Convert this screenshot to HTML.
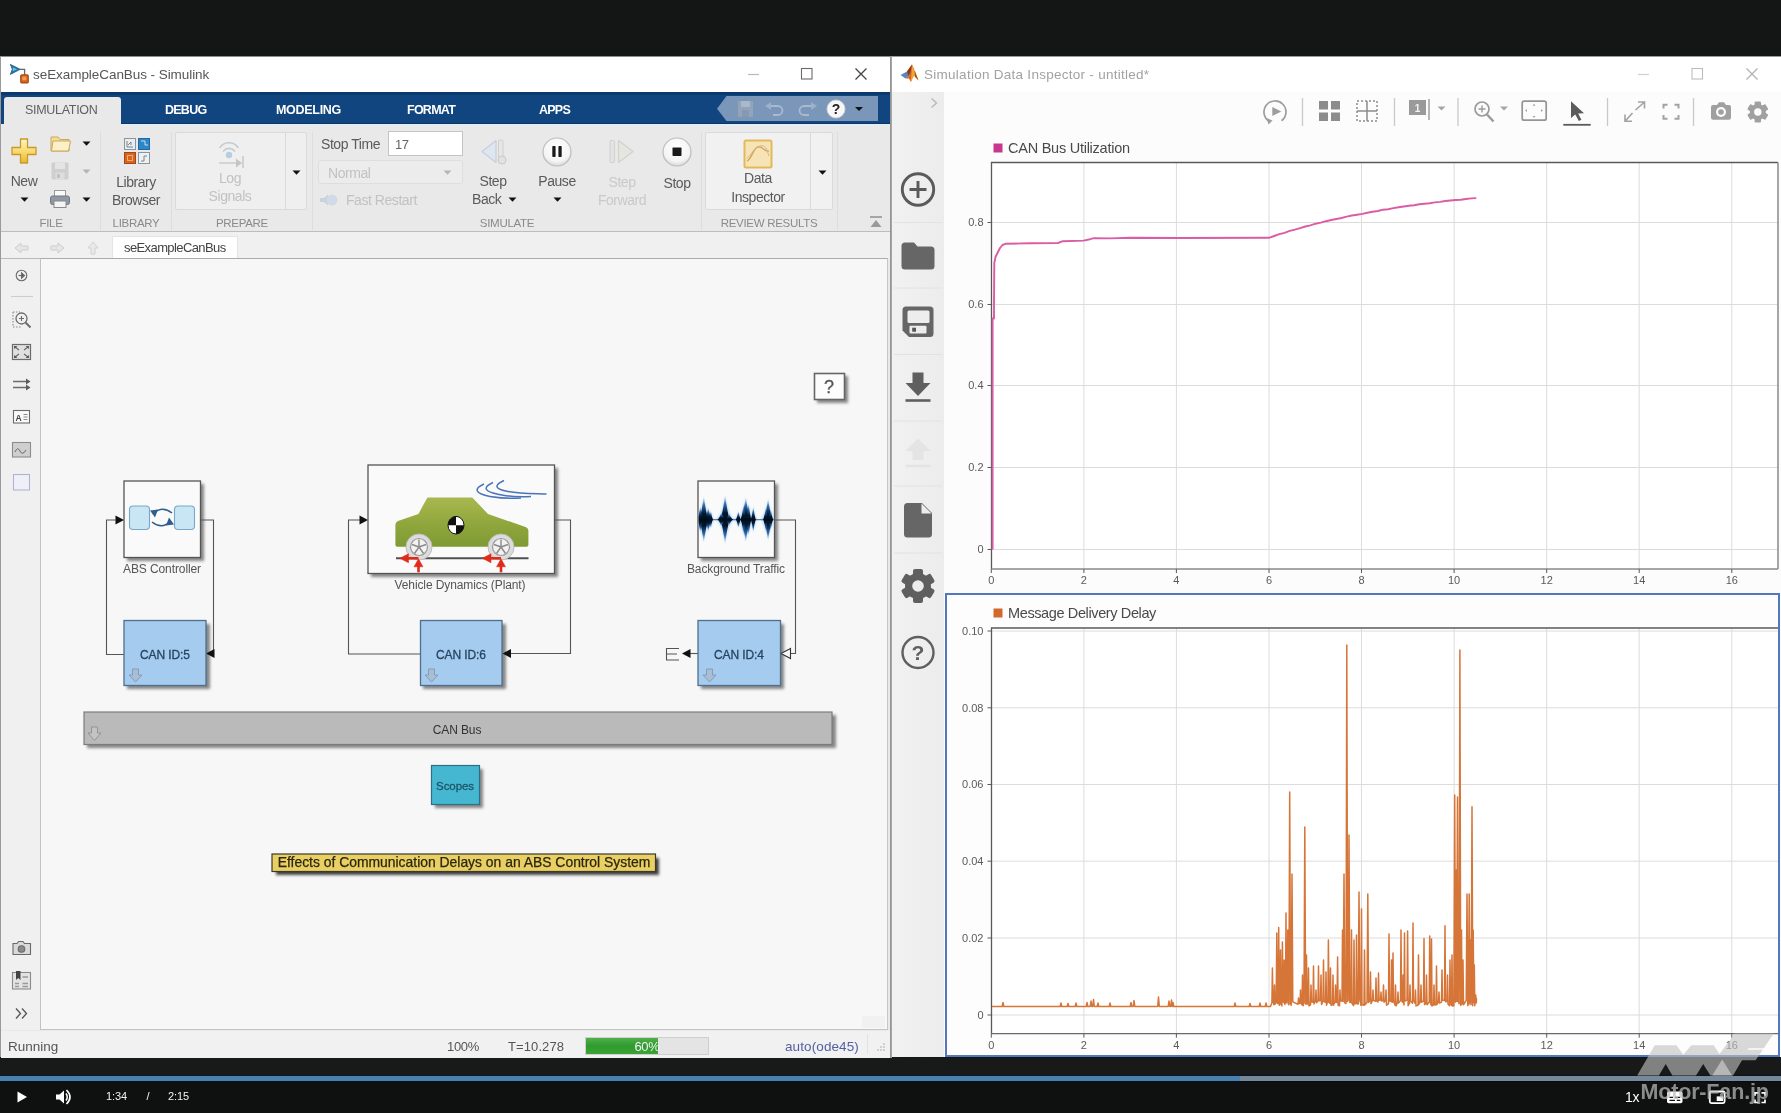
<!DOCTYPE html>
<html lang="en"><head><meta charset="utf-8"><title>seExampleCanBus - Simulink</title>
<style>
*{box-sizing:border-box;margin:0;padding:0}
html,body{width:1781px;height:1113px;overflow:hidden;background:#131615;font-family:"Liberation Sans",sans-serif;}
.a{position:absolute}
.t{position:absolute;white-space:nowrap;line-height:1;}
#root{position:absolute;left:0;top:0;width:1781px;height:1113px;overflow:hidden;background:#131615;filter:blur(0.7px)}
.ui{font-family:"Liberation Sans",sans-serif;color:#5a5a5a;font-size:13.5px;letter-spacing:-0.45px}
.c{text-align:center}
.dis{color:#c2c2c2}
.sec{font-size:11.5px;color:#8a8a8a;letter-spacing:-0.3px}
.tab{font-weight:bold;color:#fff;font-size:12.5px;letter-spacing:-0.75px}
.blk{font-size:12px;color:#555;letter-spacing:-0.1px}
.ax{font-size:11px;fill:#5a5a5a;font-family:"Liberation Sans",sans-serif}
svg{position:absolute;overflow:visible}
</style></head><body><div id="root">
<!-- ===== Simulink window ===== -->
<div class="a" id="simwin" style="left:0;top:56px;width:890px;height:1001px;background:#e9e9e9"></div>
<div class="a" style="left:0;top:56px;width:890px;height:37px;background:#fff"></div>
<!-- simulink icon -->
<svg style="left:9px;top:64px" width="22" height="22" viewBox="0 0 22 22">
 <path d="M1.400 0.400 L11.200 5.300 L1.400 10.400 L3.300 5.300 Z" fill="#2a78a4" stroke="#1c587c" stroke-width="0.800" stroke-linejoin="round"/>
 <path d="M3.800 3.500 L8 5.300 L3.800 7.300 Z" fill="#6cc0e6"/>
 <path d="M11 5.300 H15.600 V10.800" fill="none" stroke="#5a6a72" stroke-width="1.300"/>
 <rect x="11.700" y="10.800" width="7.600" height="8.200" rx="0.800" fill="#d9641c" stroke="#8c3608" stroke-width="0.900"/>
 <rect x="13.300" y="12.600" width="4" height="3.600" fill="#f39a52"/>
</svg>
<div class="t ui" style="left:33px;top:68.3px;font-size:13.5px;color:#565656;letter-spacing:-0.06px">seExampleCanBus - Simulink</div>
<!-- window controls -->
<svg style="left:740px;top:60px" width="140" height="28" viewBox="0 0 140 28">
 <path d="M8 14.5 H19" stroke="#b9b9b9" stroke-width="1.2"/>
 <rect x="61.5" y="8.5" width="10.5" height="10.5" fill="none" stroke="#6a6a6a" stroke-width="1.1"/>
 <path d="M115.5 8.5 L126.5 19.5 M126.5 8.5 L115.5 19.5" stroke="#444" stroke-width="1.3"/>
</svg>
<!-- tab bar -->
<div class="a" style="left:0;top:92px;width:890px;height:33px;background:#11457f"></div>
<div class="a" style="left:0;top:92px;width:890px;height:3px;background:#0d3a6e"></div>
<div class="a" style="left:4px;top:97px;width:117px;height:28px;background:#e9e9e9;border-radius:3px 3px 0 0"></div>
<div class="t tab" style="left:25px;top:104px;font-weight:normal;color:#606060;font-size:12.5px;letter-spacing:-0.3px">SIMULATION</div>
<div class="t tab" style="left:165px;top:104px">DEBUG</div>
<div class="t tab" style="left:276px;top:104px;letter-spacing:-0.3px">MODELING</div>
<div class="t tab" style="left:407px;top:104px">FORMAT</div>
<div class="t tab" style="left:539px;top:104px">APPS</div>
<!-- quick access -->
<svg style="left:715px;top:95px" width="170" height="28" viewBox="0 0 170 28">
 <path d="M2 13.800 L11.500 1 H163 V26 H11.500 Z" fill="#7a96b8"/>
 <!-- save -->
 <g fill="#94a4b8"><rect x="23" y="6" width="15" height="16" rx="1"/></g>
 <rect x="26" y="6" width="9" height="6" fill="#aab8cb"/><rect x="27" y="15" width="7" height="7" fill="#8499b5"/>
 <!-- undo -->
 <path d="M54 11 H63 a4.500 4.500 0 0 1 0 9 H58" fill="none" stroke="#a9b9cf" stroke-width="1.8"/>
 <path d="M50 11 L56 7 V15 Z" fill="#9db1cb"/>
 <!-- redo -->
 <path d="M98 11 H89 a4.500 4.500 0 0 0 0 9 H94" fill="none" stroke="#a9b9cf" stroke-width="1.8"/>
 <path d="M102 11 L96 7 V15 Z" fill="#9db1cb"/>
 <!-- help -->
 <circle cx="121" cy="14" r="9" fill="#f7f7f7" stroke="#d0d4da" stroke-width="1"/>
 <text x="121" y="19" text-anchor="middle" font-family="Liberation Sans, sans-serif" font-weight="bold" font-size="14" fill="#222">?</text>
 <path d="M140 12 H148 L144 16 Z" fill="#111"/>
</svg>
<!-- toolstrip -->
<div class="a" style="left:0;top:124px;width:890px;height:107px;background:#e9e9e9"></div>
<div class="a" style="left:0;top:231px;width:890px;height:1.500px;background:#bdbdbd"></div>
<div class="a" style="left:121px;top:124px;width:769px;height:1.500px;background:#e3edf7"></div>
<div class="a" style="left:121px;top:122.500px;width:769px;height:1.500px;background:#0c3568"></div>
<div class="a" style="left:0;top:56px;width:890px;height:1px;background:#8d8d8d"></div>
<!-- left window edge -->
<div class="a" style="left:0;top:56px;width:1px;height:1001px;background:#9a9a9a"></div>
<!-- ===== toolstrip content ===== -->
<!-- New -->
<svg style="left:10px;top:137px" width="28" height="28" viewBox="0 0 28 28">
 <defs><linearGradient id="gNew" x1="0" y1="0" x2="0" y2="1"><stop offset="0" stop-color="#fff6c4"/><stop offset="0.5" stop-color="#f9dc72"/><stop offset="1" stop-color="#ecb630"/></linearGradient></defs>
 <path d="M10.500 2 H17.500 V10.500 H26 V17.500 H17.500 V26 H10.500 V17.500 H2 V10.500 H10.500 Z" fill="url(#gNew)" stroke="#c79a2c" stroke-width="1.3" stroke-linejoin="round"/>
</svg>
<div class="t ui c" style="left:-26px;width:100px;top:174px;font-size:14px">New</div>
<svg style="left:20px;top:197px" width="10" height="6"><path d="M0.500 0.500 H8.500 L4.500 4.800 Z" fill="#111"/></svg>
<!-- folder -->
<svg style="left:49px;top:134px" width="24" height="20" viewBox="0 0 24 20">
 <path d="M2 3 H9 L11 5.500 H20 V17 H2 Z" fill="#f3dc9a" stroke="#c9a95a" stroke-width="1"/>
 <path d="M4 7 H21.500 L19.500 17 H2.500 Z" fill="#fbf0c8" stroke="#c9a95a" stroke-width="1"/>
</svg>
<svg style="left:82px;top:141px" width="10" height="6"><path d="M0.500 0.500 H8.500 L4.500 4.800 Z" fill="#111"/></svg>
<!-- save (disabled) -->
<svg style="left:50px;top:161px" width="20" height="20" viewBox="0 0 20 20">
 <rect x="1.500" y="1.500" width="17" height="17" rx="1.500" fill="#cfcfcf"/>
 <rect x="5" y="1.500" width="10" height="6.500" fill="#e4e4e4"/>
 <rect x="5.500" y="11.500" width="9" height="7" fill="#dedede"/><rect x="7" y="13" width="3" height="4" fill="#c2c2c2"/>
</svg>
<svg style="left:82px;top:169px" width="10" height="6"><path d="M0.500 0.500 H8.500 L4.500 4.800 Z" fill="#b5b5b5"/></svg>
<!-- print -->
<svg style="left:49px;top:189px" width="22" height="20" viewBox="0 0 22 20">
 <rect x="5.500" y="1.500" width="11" height="7" fill="#fafafa" stroke="#9a9a9a" stroke-width="1"/>
 <rect x="1.500" y="7" width="19" height="8.500" rx="2" fill="#8f98a3" stroke="#6f7883" stroke-width="1"/>
 <rect x="5" y="12" width="12" height="6.500" fill="#f4f4f4" stroke="#8a8a8a" stroke-width="1"/>
</svg>
<svg style="left:82px;top:197px" width="10" height="6"><path d="M0.500 0.500 H8.500 L4.500 4.800 Z" fill="#111"/></svg>
<div class="t sec c" style="left:1px;width:100px;top:218px">FILE</div>
<div class="a" style="left:100px;top:132px;width:1px;height:98px;background:#dddddd"></div>
<!-- Library browser -->
<svg style="left:123px;top:137px" width="28" height="28" viewBox="0 0 28 28">
 <rect x="1.500" y="1.500" width="11" height="11" fill="#e9edf0" stroke="#8c959c" stroke-width="1"/>
 <path d="M4 10 V4 M4 10 H10 M5 8 L8 5 M8 5 V8" stroke="#7b858e" stroke-width="1" fill="none"/>
 <rect x="15.500" y="1.500" width="11" height="11" fill="#2f86c4" stroke="#1d6aa5" stroke-width="1"/>
 <path d="M18 4 H22 V8 H25" stroke="#bfe0f5" stroke-width="1" fill="none"/>
 <rect x="1.500" y="15.500" width="11" height="11" fill="#d7641e" stroke="#a8440d" stroke-width="1"/>
 <rect x="4.500" y="18.500" width="5" height="5" fill="none" stroke="#f0a97c" stroke-width="1"/>
 <rect x="15.500" y="15.500" width="11" height="11" fill="#eef1f3" stroke="#8c959c" stroke-width="1"/>
 <path d="M18 24 H21 V19 H24" stroke="#7b858e" stroke-width="1" fill="none"/>
</svg>
<div class="t ui c" style="left:86px;width:100px;top:175px;font-size:14px">Library</div>
<div class="t ui c" style="left:86px;width:100px;top:193px;font-size:14px">Browser</div>
<div class="t sec c" style="left:86px;width:100px;top:218px">LIBRARY</div>
<div class="a" style="left:171px;top:132px;width:1px;height:98px;background:#dddddd"></div>
<!-- Prepare gallery -->
<div class="a" style="left:175px;top:132px;width:132px;height:78px;background:#efefef;border:1px solid #dadada;border-radius:2px"></div>
<div class="a" style="left:285px;top:133px;width:1px;height:76px;background:#dadada"></div>
<svg style="left:214px;top:138px" width="32" height="32" viewBox="0 0 32 32">
 <g fill="none" stroke="#c3cbd3" stroke-width="1.600" stroke-linecap="round">
  <path d="M6 9.500 A11 11 0 0 1 24 9.500"/><path d="M9.500 13 A7 7 0 0 1 20.500 13"/>
 </g>
 <circle cx="15" cy="17" r="3.200" fill="#b7cde3"/>
 <path d="M5 25 H24" stroke="#c9c9c9" stroke-width="1.400"/>
 <path d="M22 20.500 L28 25 L22 29.500 Z" fill="#c5c5c5"/><path d="M29 18 V30" stroke="#c5c5c5" stroke-width="1.400"/>
</svg>
<div class="t ui c dis" style="left:180px;width:100px;top:171px;font-size:14px">Log</div>
<div class="t ui c dis" style="left:180px;width:100px;top:189px;font-size:14px">Signals</div>
<svg style="left:292px;top:170px" width="10" height="6"><path d="M0.500 0.500 H8.500 L4.500 4.800 Z" fill="#111"/></svg>
<div class="t sec c" style="left:192px;width:100px;top:218px">PREPARE</div>
<div class="a" style="left:312px;top:132px;width:1px;height:98px;background:#dddddd"></div>
<!-- Simulate -->
<div class="t ui" style="left:321px;top:137px;font-size:14px">Stop Time</div>
<div class="a" style="left:388px;top:131px;width:75px;height:25px;background:#fff;border:1px solid #c4c4c4"></div>
<div class="t ui" style="left:395px;top:138px;font-size:13px;color:#666">17</div>
<div class="a" style="left:318px;top:160px;width:145px;height:24px;background:#ececec;border:1px solid #dedede;border-radius:3px"></div>
<div class="t ui dis" style="left:328px;top:166px;font-size:14px">Normal</div>
<svg style="left:443px;top:170px" width="10" height="6"><path d="M0.500 0.500 H8.500 L4.500 4.800 Z" fill="#b5b5b5"/></svg>
<svg style="left:319px;top:192px" width="22" height="16" viewBox="0 0 22 16">
 <path d="M1 6 H5 L9 2.500 V13.500 L5 10 H1 Z" fill="#c9d3dc"/>
 <circle cx="13" cy="8" r="5.500" fill="#cfdbe8"/>
</svg>
<div class="t ui dis" style="left:346px;top:193px;font-size:14px">Fast Restart</div>
<!-- Step back -->
<svg style="left:479px;top:138px" width="30" height="28" viewBox="0 0 30 28">
 <path d="M17 2.500 L3 13.500 L17 24.500 Z" fill="#dfe6f0" stroke="#c6cfdc" stroke-width="1.200" stroke-linejoin="round"/>
 <rect x="19.500" y="2" width="4.500" height="20" rx="1" fill="#e6e6e6" stroke="#cfcfcf" stroke-width="1"/>
 <circle cx="23" cy="22" r="4" fill="#e2e2e2" stroke="#c9c9c9" stroke-width="1"/>
</svg>
<div class="t ui c" style="left:443px;width:100px;top:174px;font-size:14px">Step</div>
<div class="t ui" style="left:472px;top:192px;font-size:14px">Back</div>
<svg style="left:508px;top:197px" width="10" height="6"><path d="M0.500 0.500 H8.500 L4.500 4.800 Z" fill="#111"/></svg>
<!-- Pause -->
<svg style="left:541px;top:135px" width="32" height="34" viewBox="0 0 32 34">
 <defs><radialGradient id="gBtn" cx="0.5" cy="0.35" r="0.7"><stop offset="0" stop-color="#ffffff"/><stop offset="0.7" stop-color="#f4f4f4"/><stop offset="1" stop-color="#cfcfcf"/></radialGradient></defs>
 <circle cx="16" cy="17" r="14" fill="url(#gBtn)" stroke="#bdbdbd" stroke-width="1.200"/>
 <rect x="11.300" y="11" width="3.300" height="11" rx="0.800" fill="#1a1a1a"/><rect x="17.400" y="11" width="3.300" height="11" rx="0.800" fill="#1a1a1a"/>
</svg>
<div class="t ui c" style="left:507px;width:100px;top:174px;font-size:14px">Pause</div>
<svg style="left:553px;top:197px" width="10" height="6"><path d="M0.500 0.500 H8.500 L4.500 4.800 Z" fill="#111"/></svg>
<!-- Step forward (disabled) -->
<svg style="left:607px;top:138px" width="30" height="28" viewBox="0 0 30 28">
 <rect x="3" y="2.500" width="4.500" height="22" rx="1" fill="#e3e3e3" stroke="#d0d0d0" stroke-width="1"/>
 <path d="M11.500 2.500 L26 13.500 L11.500 24.500 Z" fill="#e6e6e0" stroke="#d2d2cc" stroke-width="1.200" stroke-linejoin="round"/>
</svg>
<div class="t ui c dis" style="left:572px;width:100px;top:175px;font-size:14px;color:#c9c9c9">Step</div>
<div class="t ui c dis" style="left:572px;width:100px;top:193px;font-size:14px;color:#c9c9c9">Forward</div>
<!-- Stop -->
<svg style="left:661px;top:135px" width="32" height="34" viewBox="0 0 32 34">
 <circle cx="16" cy="17" r="14" fill="url(#gBtn)" stroke="#bdbdbd" stroke-width="1.200"/>
 <rect x="11.500" y="12.500" width="9" height="8.500" rx="0.800" fill="#1a1a1a"/>
</svg>
<div class="t ui c" style="left:627px;width:100px;top:175.5px;font-size:14px">Stop</div>
<div class="t sec c" style="left:457px;width:100px;top:218px">SIMULATE</div>
<div class="a" style="left:701px;top:132px;width:1px;height:98px;background:#dddddd"></div>
<!-- Review results gallery -->
<div class="a" style="left:705px;top:132px;width:128px;height:78px;background:#f1f1f1;border:1px solid #dadada;border-radius:2px"></div>
<div class="a" style="left:810px;top:133px;width:1px;height:76px;background:#dadada"></div>
<svg style="left:743px;top:139px" width="30" height="30" viewBox="0 0 30 30">
 <rect x="1.500" y="1.500" width="27" height="27" rx="1.500" fill="#f7e4b6" stroke="#e2b95a" stroke-width="2"/>
 <path d="M4 22 C9 20 10 9 15 8 S21 13 26 12" fill="none" stroke="#d9a24a" stroke-width="1.300"/>
 <path d="M4 19 C8 17 11 8 17 7 S23 9 26 17" fill="none" stroke="#c9b79a" stroke-width="1"/>
</svg>
<div class="t ui c" style="left:708px;width:100px;top:171px;font-size:14px">Data</div>
<div class="t ui c" style="left:708px;width:100px;top:190px;font-size:14px">Inspector</div>
<svg style="left:818px;top:170px" width="10" height="6"><path d="M0.500 0.500 H8.500 L4.500 4.800 Z" fill="#111"/></svg>
<div class="t sec c" style="left:719px;width:100px;top:218px">REVIEW RESULTS</div>
<div class="a" style="left:837px;top:132px;width:1px;height:98px;background:#dddddd"></div>
<svg style="left:869px;top:215px" width="14" height="14" viewBox="0 0 14 14"><path d="M1 2 H13" stroke="#8f8f8f" stroke-width="1.500"/><path d="M7 5 L12.500 12 H1.500 Z" fill="#9a9a9a"/></svg>
<!-- ===== breadcrumb bar ===== -->
<div class="a" style="left:1px;top:232px;width:889px;height:27px;background:#f0f0f0"></div>
<svg style="left:12px;top:240px" width="92" height="16" viewBox="0 0 92 16">
 <path d="M3 8 L9 3 V6 H16 V10 H9 V13 Z" fill="#e6e6e6" stroke="#cdcdcd" stroke-width="1"/>
 <path d="M52 8 L46 3 V6 H39 V10 H46 V13 Z" fill="#e6e6e6" stroke="#cdcdcd" stroke-width="1"/>
 <path d="M81 2 L86 8 H83 V14 H79 V8 H76 Z" fill="#e9e9e9" stroke="#d2d2d2" stroke-width="1"/>
</svg>
<div class="a" style="left:112px;top:236px;width:126px;height:23px;background:#fefefe;border:1px solid #e4e4e4;border-bottom:none"></div>
<div class="t ui" style="left:124px;top:241px;font-size:13px;color:#444;letter-spacing:-0.6px">seExampleCanBus</div>
<div class="a" style="left:1px;top:258px;width:40px;height:1.500px;background:#b9b9b9"></div>
<!-- palette -->
<div class="a" style="left:1px;top:259px;width:40px;height:771px;background:#f0f0f0"></div>
<!-- canvas -->
<div class="a" style="left:40px;top:258px;width:848px;height:772px;background:#f7f7f7;border-top:1.500px solid #ababab;border-left:1.500px solid #c2c2c2;border-right:1.500px solid #c6c6c6;border-bottom:1.500px solid #c4c4c4"></div>
<div class="a" style="left:862px;top:1016px;width:23px;height:12px;background:#f1f1f1"></div>
<!-- palette icons -->
<svg style="left:8px;top:264px" width="28" height="232" viewBox="0 0 28 232">
 <g fill="none" stroke="#6c6c6c" stroke-width="1.100">
  <circle cx="13.500" cy="11.500" r="5.300"/>
  <path d="M10.500 11.500 H15" /><path d="M13.500 8.800 L16.500 11.500 L13.500 14.200 Z" fill="#5c5c5c"/>
  <path d="M3 32.500 H25" stroke="#cdcdcd"/>
  <!-- zoom -->
  <path d="M5 48 V63 H14" stroke-dasharray="1.500 1.500" stroke="#8a8a8a"/>
  <path d="M5 48 H12" stroke-dasharray="1.500 1.500" stroke="#8a8a8a"/>
  <circle cx="13.500" cy="54.500" r="5.500" stroke-width="1.300"/>
  <path d="M11 54.500 H16 M13.500 52 V57" />
  <path d="M17.500 58.500 L22.500 63.500" stroke-width="2"/>
  <!-- fit -->
  <rect x="4.500" y="80.500" width="18" height="15" stroke-width="1.200" fill="#e0e0e0"/>
  <path d="M7 83 L11 86 M20 83 L16 86 M7 93 L11 90 M20 93 L16 90" stroke-width="1.300"/>
  <path d="M6 82 H9.500 L6 85 Z M21 82 H17.500 L21 85 Z M6 94 H9.500 L6 91 Z M21 94 H17.500 L21 91 Z" fill="#5c5c5c" stroke="none"/>
  <!-- arrows -->
  <path d="M5 117.500 H19 M5 123.500 H19" stroke-width="1.300"/>
  <path d="M18 114.500 L22.500 117.500 L18 120.500 Z M18 120.500 L22.500 123.500 L18 126.500 Z" fill="#5c5c5c" stroke="none"/>
  <!-- A -->
  <rect x="5.500" y="146.500" width="16" height="12.500" fill="#fafafa"/>
  <path d="M15.500 150.500 H19.500 M15.500 153 H19.500 M15.500 155.500 H19.500" stroke-width="0.800"/>
  <!-- image -->
  <rect x="4.500" y="178.500" width="18" height="14.500" fill="#cfcfcf" stroke="#8c8c8c"/>
  <path d="M7 188 Q9.500 182 12 187 T18 186" stroke="#6a6a6a" stroke-width="1"/>
  <!-- square -->
  <rect x="5.500" y="210.500" width="16" height="15.500" fill="#efeffa" stroke="#b4b4cf"/>
 </g>
 <text x="10.500" y="157" text-anchor="middle" font-family="Liberation Sans, sans-serif" font-weight="bold" font-size="8.500" fill="#444">A</text>
</svg>
<svg style="left:8px;top:936px" width="28" height="90" viewBox="0 0 28 90">
 <g fill="none" stroke="#6a6a6a" stroke-width="1.100">
  <path d="M5 7.500 H9 L10.500 5.500 H15 L16.500 7.500 H22.500 V18.500 H5 Z" fill="#d9d9d9"/>
  <circle cx="13.500" cy="13" r="3.300" fill="#8a8a8a"/>
  <rect x="4.500" y="36.500" width="18" height="16.500" fill="#e3e3e3" stroke="#8a8a8a"/>
  <path d="M8 35 V44 L10.200 42 L12.500 44 V35 Z" fill="#444" stroke="none"/>
  <path d="M14.500 41 H20 M7 47.500 H11 M14.500 47.500 H20 M7 50.500 H11 M14.500 50.500 H20" stroke="#9a9a9a" stroke-width="1.600"/>
  <path d="M8 72.500 L12.500 77.500 L8 82.500 M14 72.500 L18.500 77.500 L14 82.500" stroke="#555" stroke-width="1.300"/>
 </g>
</svg>
<!-- status bar -->
<div class="a" style="left:1px;top:1031px;width:889px;height:27px;background:#f1f1f1"></div>
<div class="t ui" style="left:8px;top:1040px;font-size:13.5px;color:#555;letter-spacing:0px">Running</div>
<div class="t ui" style="left:447px;top:1040px;font-size:13px;color:#555;letter-spacing:-0.3px">100%</div>
<div class="t ui" style="left:508px;top:1040px;font-size:13px;color:#555;letter-spacing:0.1px">T=10.278</div>
<div class="a" style="left:585px;top:1037px;width:124px;height:18px;background:#e4e4e4;border:1px solid #cfcfcf"></div>
<div class="a" style="left:586px;top:1038px;width:72px;height:16px;background:linear-gradient(#4fb04a,#2f9a2d 50%,#3aa436)"></div>
<div class="t ui c" style="left:597px;width:100px;top:1040px;font-size:13px;color:#f4f4f4;letter-spacing:-0.3px">60%</div>
<div class="t ui" style="left:785px;top:1040px;font-size:13.5px;color:#5560a0;letter-spacing:0.1px">auto(ode45)</div>
<div class="a" style="left:867px;top:1034px;width:1px;height:20px;background:#e2e2e2"></div>
<svg style="left:874px;top:1041px" width="12" height="12" viewBox="0 0 12 12"><g fill="#cfcfcf"><rect x="9" y="2" width="2" height="2"/><rect x="6" y="5" width="2" height="2"/><rect x="9" y="5" width="2" height="2"/><rect x="3" y="8" width="2" height="2"/><rect x="6" y="8" width="2" height="2"/><rect x="9" y="8" width="2" height="2"/></g></svg>
<!-- ===== model blocks ===== -->
<svg style="left:0;top:0" width="890" height="1113" viewBox="0 0 890 1113">
 <defs>
  <filter id="sh" x="-20%" y="-20%" width="150%" height="150%"><feGaussianBlur stdDeviation="1.600"/></filter>
  <linearGradient id="carG" x1="0" y1="0" x2="0" y2="1"><stop offset="0" stop-color="#a9b84e"/><stop offset="0.55" stop-color="#8fa63c"/><stop offset="1" stop-color="#7f9a34"/></linearGradient>
  <linearGradient id="wavG" x1="0" y1="0" x2="0" y2="1"><stop offset="0" stop-color="#7fb2e4" stop-opacity="0.2"/><stop offset="0.18" stop-color="#2f6db5"/><stop offset="0.36" stop-color="#041a33"/><stop offset="0.5" stop-color="#020c18"/><stop offset="0.64" stop-color="#041a33"/><stop offset="0.82" stop-color="#2f6db5"/><stop offset="1" stop-color="#7fb2e4" stop-opacity="0.2"/></linearGradient><linearGradient id="wavH" x1="0" y1="0" x2="0" y2="1"><stop offset="0" stop-color="#cfe6fb" stop-opacity="0.3"/><stop offset="0.5" stop-color="#9ccaf0"/><stop offset="1" stop-color="#cfe6fb" stop-opacity="0.3"/></linearGradient>
  <filter id="wb" x="-10%" y="-10%" width="120%" height="120%"><feGaussianBlur stdDeviation="0.600"/></filter><filter id="wb2" x="-10%" y="-10%" width="120%" height="120%"><feGaussianBlur stdDeviation="1.300"/></filter><clipPath id="wclip"><rect x="698.600" y="481.600" width="75.300" height="75.300"/></clipPath>
 </defs>
 <!-- shadows -->
 <g fill="#3a3a3a" opacity="0.600" filter="url(#sh)">
  <rect x="127" y="484" width="77" height="77"/>
  <rect x="371" y="468" width="187" height="109"/>
  <rect x="701" y="484" width="77" height="77"/>
  <rect x="127" y="624" width="83" height="65"/>
  <rect x="423" y="624" width="83" height="65"/>
  <rect x="701" y="624" width="83" height="65"/>
  <rect x="87" y="715" width="749" height="33"/>
  <rect x="435" y="769" width="48" height="39"/>
  <rect x="817" y="376" width="31" height="27"/>
 </g>
 <rect x="276" y="858" width="383" height="17" fill="#222" opacity="0.850" filter="url(#sh)"/>
 <!-- signal lines -->
 <g fill="none" stroke="#555" stroke-width="1.100">
  <path d="M124 654.500 H106.500 V520 H117"/>
  <path d="M200 520 H213.500 V653.500 H212"/>
  <path d="M420 654 H348.500 V520 H361"/>
  <path d="M555 520 H570.500 V653.500 H509"/>
  <path d="M775 520 H795.500 V653.500 H790"/>
  <path d="M698 653.500 H689"/>
  <path d="M679 648.500 H666.500 V660 H679 M666.500 654 H677"/>
 </g>
 <g fill="#111">
  <path d="M115.500 515.500 L124 520 L115.500 524.500 Z"/>
  <path d="M214.500 649 L206 653.500 L214.500 658 Z"/>
  <path d="M359.500 515.500 L368 520 L359.500 524.500 Z"/>
  <path d="M511 649 L502.500 653.500 L511 658 Z"/>
  <path d="M690.500 649 L682 653.500 L690.500 658 Z"/>
 </g>
 <path d="M790.500 648.500 L781 653.500 L790.500 658.500 Z" fill="#f7f7f7" stroke="#333" stroke-width="1.100"/>
 <!-- ABS Controller -->
 <rect x="124" y="481" width="76.500" height="76.500" fill="#fafafa" stroke="#555" stroke-width="1.300"/>
 <rect x="129.500" y="506" width="20" height="23.500" rx="3.500" fill="#c8e6f3" stroke="#7aa7c9" stroke-width="1.100"/>
 <rect x="174.500" y="506" width="20" height="23.500" rx="3.500" fill="#c8e6f3" stroke="#7aa7c9" stroke-width="1.100"/>
 <g fill="none" stroke="#2f5d8f" stroke-width="1.600">
  <path d="M153 514 Q162 505 172 513"/><path d="M171 521 Q162 530 152 522"/>
 </g>
 <path d="M150 510.500 L158 509.500 L155 517.500 Z M174 524.500 L166 525.500 L169 517.500 Z" fill="#2f5d8f"/>
 <!-- Vehicle Dynamics -->
 <rect x="368" y="465" width="186.500" height="108.500" fill="#fafafa" stroke="#555" stroke-width="1.300"/>
 <g fill="none" stroke="#4a74b8" stroke-width="1.500">
  <path d="M504 480.500 C494 485 494 489 508 491.500 C522 494 536 493.500 546.500 494"/>
  <path d="M493 482.500 C483 487 483 491.500 499 494.500 C512 497 524 497 531 496.500"/>
  <path d="M484 484 C474 488.500 474 493.500 490 496.500 C502 498.500 514 498.500 521 498"/>
 </g>
 <path d="M395.400 545 V524.500 Q395.400 522 398 521 L418.400 513.900 L427.400 497.600 H472.300 L488 513.900 L525.500 527 Q528.400 528 528.400 531 V545 Q528.400 546.800 526.500 546.800 H397.300 Q395.400 546.800 395.400 545 Z" fill="url(#carG)"/>
 <path d="M396 558.300 H528.500" stroke="#505050" stroke-width="2"/>
 <g>
  <circle cx="419" cy="547" r="13" fill="#dcdcdc" stroke="#bdbdbd" stroke-width="1"/><circle cx="419" cy="547" r="8.500" fill="#f2f2f2" stroke="#9a9a9a" stroke-width="1.200"/>
  <path d="M419 547 V539.500 M419 547 L426 544.500 M419 547 L423.500 553.500 M419 547 L414.500 553.500 M419 547 L412 544.500" stroke="#8a8a8a" stroke-width="1.400"/>
  <circle cx="501" cy="547" r="13" fill="#dcdcdc" stroke="#bdbdbd" stroke-width="1"/><circle cx="501" cy="547" r="8.500" fill="#f2f2f2" stroke="#9a9a9a" stroke-width="1.200"/>
  <path d="M501 547 V539.500 M501 547 L508 544.500 M501 547 L505.500 553.500 M501 547 L496.500 553.500 M501 547 L494 544.500" stroke="#8a8a8a" stroke-width="1.400"/>
 </g>
 <g fill="#e02a1c" stroke="#e02a1c" stroke-width="2.600">
  <path d="M418.500 558.300 H407" /><path d="M408.500 553.800 L399.800 558.300 L408.500 562.800 Z" stroke-width="0.500"/>
  <path d="M418.500 572.300 V566"/><path d="M414 566.800 L418.500 558.800 L423 566.800 Z" stroke-width="0.500"/>
  <path d="M501 558.300 H489.500" /><path d="M491 553.800 L482.300 558.300 L491 562.800 Z" stroke-width="0.500"/>
  <path d="M501 572.300 V566"/><path d="M496.500 566.800 L501 558.800 L505.500 566.800 Z" stroke-width="0.500"/>
 </g>
 <ellipse cx="456" cy="525.200" rx="8" ry="8.800" fill="#fff" stroke="#111" stroke-width="1"/>
 <path d="M456 525.200 V516.400 A8 8.800 0 0 0 448 525.200 Z M456 525.200 V534 A8 8.800 0 0 0 464 525.200 Z" fill="#111"/>
 <!-- Background Traffic -->
 <rect x="698" y="481" width="76.500" height="76.500" fill="#fafafa" stroke="#555" stroke-width="1.300"/>
 <g clip-path="url(#wclip)">
  <g filter="url(#wb2)">
  <path d="M696.3 519.6 C699.3 515.8 701.5 506.7 703.8 496.1 C706.0 506.7 708.3 515.8 711.3 519.6 C708.3 523.4 706.0 532.5 703.8 543.1 C701.5 532.5 699.3 523.4 696.3 519.6 Z" fill="url(#wavH)"/>
  <path d="M695.5 519.6 C697.4 517.5 698.9 512.3 700.3 506.3 C701.7 512.3 703.2 517.5 705.1 519.6 C703.2 521.7 701.7 526.9 700.3 532.9 C698.9 526.9 697.4 521.7 695.5 519.6 Z" fill="url(#wavH)"/>
  <path d="M702.9 519.6 C705.1 517.6 706.7 512.9 708.3 507.4 C709.9 512.9 711.5 517.6 713.7 519.6 C711.5 521.6 709.9 526.3 708.3 531.8 C706.7 526.3 705.1 521.6 702.9 519.6 Z" fill="url(#wavH)"/>
  <path d="M707.5 519.6 C708.8 518.1 709.8 514.6 710.8 510.4 C711.8 514.6 712.8 518.1 714.1 519.6 C712.8 521.1 711.8 524.6 710.8 528.8 C709.8 524.6 708.8 521.1 707.5 519.6 Z" fill="url(#wavH)"/>
  <path d="M717.6 519.6 C720.6 515.6 722.9 505.9 725.1 494.6 C727.4 505.9 729.6 515.6 732.6 519.6 C729.6 523.6 727.4 533.3 725.1 544.6 C722.9 533.3 720.6 523.6 717.6 519.6 Z" fill="url(#wavH)"/>
  <path d="M715.5 519.6 C717.9 518.5 719.7 515.7 721.5 512.5 C723.3 515.7 725.1 518.5 727.5 519.6 C725.1 520.7 723.3 523.5 721.5 526.7 C719.7 523.5 717.9 520.7 715.5 519.6 Z" fill="url(#wavH)"/>
  <path d="M723.0 519.6 C725.4 518.6 727.2 516.2 729.0 513.5 C730.8 516.2 732.6 518.6 735.0 519.6 C732.6 520.6 730.8 523.0 729.0 525.7 C727.2 523.0 725.4 520.6 723.0 519.6 Z" fill="url(#wavH)"/>
  <path d="M734.6 519.6 C736.1 518.2 737.3 514.8 738.4 510.9 C739.5 514.8 740.6 518.2 742.1 519.6 C740.6 521.0 739.5 524.4 738.4 528.3 C737.3 524.4 736.1 521.0 734.6 519.6 Z" fill="url(#wavH)"/>
  <path d="M738.0 519.6 C741.1 515.9 743.5 507.0 745.8 496.7 C748.1 507.0 750.5 515.9 753.6 519.6 C750.5 523.3 748.1 532.2 745.8 542.6 C743.5 532.2 741.1 523.3 738.0 519.6 Z" fill="url(#wavH)"/>
  <path d="M739.1 519.6 C740.9 517.2 742.2 511.2 743.6 504.3 C745.0 511.2 746.3 517.2 748.1 519.6 C746.3 522.0 745.0 528.0 743.6 534.9 C742.2 528.0 740.9 522.0 739.1 519.6 Z" fill="url(#wavH)"/>
  <path d="M744.1 519.6 C745.9 517.0 747.2 510.6 748.6 503.3 C750.0 510.6 751.3 517.0 753.1 519.6 C751.3 522.2 750.0 528.6 748.6 535.9 C747.2 528.6 745.9 522.2 744.1 519.6 Z" fill="url(#wavH)"/>
  <path d="M749.4 519.6 C751.0 517.5 752.1 512.3 753.3 506.3 C754.5 512.3 755.6 517.5 757.2 519.6 C755.6 521.7 754.5 526.9 753.3 532.9 C752.1 526.9 751.0 521.7 749.4 519.6 Z" fill="url(#wavH)"/>
  <path d="M761.2 519.6 C764.0 516.2 766.0 507.8 768.1 498.2 C770.2 507.8 772.2 516.2 775.0 519.6 C772.2 523.0 770.2 531.4 768.1 541.0 C766.0 531.4 764.0 523.0 761.2 519.6 Z" fill="url(#wavH)"/>
  <path d="M761.9 519.6 C763.5 517.6 764.6 512.9 765.8 507.4 C767.0 512.9 768.1 517.6 769.7 519.6 C768.1 521.6 767.0 526.3 765.8 531.8 C764.6 526.3 763.5 521.6 761.9 519.6 Z" fill="url(#wavH)"/>
  <path d="M766.7 519.6 C768.3 517.8 769.4 513.4 770.6 508.4 C771.8 513.4 772.9 517.8 774.5 519.6 C772.9 521.4 771.8 525.8 770.6 530.8 C769.4 525.8 768.3 521.4 766.7 519.6 Z" fill="url(#wavH)"/>
  </g>
  <path d="M699 519.6 H774" stroke="#3a6aa8" stroke-width="1.300" opacity="0.85"/>
  <g filter="url(#wb)">
  <path d="M698.8 519.6 C700.8 515.9 702.3 507.0 703.8 496.6 C705.3 507.0 706.8 515.9 708.8 519.6 C706.8 523.3 705.3 532.2 703.8 542.6 C702.3 532.2 700.8 523.3 698.8 519.6 Z" fill="url(#wavG)"/>
  <path d="M697.1 519.6 C698.4 517.5 699.3 512.5 700.3 506.6 C701.3 512.5 702.2 517.5 703.5 519.6 C702.2 521.7 701.3 526.8 700.3 532.6 C699.3 526.8 698.4 521.7 697.1 519.6 Z" fill="url(#wavG)"/>
  <path d="M704.7 519.6 C706.1 517.7 707.2 513.0 708.3 507.6 C709.4 513.0 710.5 517.7 711.9 519.6 C710.5 521.5 709.4 526.2 708.3 531.6 C707.2 526.2 706.1 521.5 704.7 519.6 Z" fill="url(#wavG)"/>
  <path d="M708.6 519.6 C709.5 518.2 710.1 514.6 710.8 510.6 C711.5 514.6 712.1 518.2 713.0 519.6 C712.1 521.0 711.5 524.6 710.8 528.6 C710.1 524.6 709.5 521.0 708.6 519.6 Z" fill="url(#wavG)"/>
  <path d="M720.1 519.6 C722.1 515.7 723.6 506.1 725.1 495.1 C726.6 506.1 728.1 515.7 730.1 519.6 C728.1 523.5 726.6 533.1 725.1 544.1 C723.6 533.1 722.1 523.5 720.1 519.6 Z" fill="url(#wavG)"/>
  <path d="M717.5 519.6 C719.1 518.5 720.3 515.8 721.5 512.6 C722.7 515.8 723.9 518.5 725.5 519.6 C723.9 520.7 722.7 523.5 721.5 526.6 C720.3 523.5 719.1 520.7 717.5 519.6 Z" fill="url(#wavG)"/>
  <path d="M725.0 519.6 C726.6 518.6 727.8 516.3 729.0 513.6 C730.2 516.3 731.4 518.6 733.0 519.6 C731.4 520.6 730.2 522.9 729.0 525.6 C727.8 522.9 726.6 520.6 725.0 519.6 Z" fill="url(#wavG)"/>
  <path d="M735.9 519.6 C736.9 518.2 737.6 514.9 738.4 511.1 C739.1 514.9 739.9 518.2 740.9 519.6 C739.9 521.0 739.1 524.3 738.4 528.1 C737.6 524.3 736.9 521.0 735.9 519.6 Z" fill="url(#wavG)"/>
  <path d="M740.6 519.6 C742.7 516.0 744.2 507.2 745.8 497.1 C747.4 507.2 748.9 516.0 751.0 519.6 C748.9 523.2 747.4 532.0 745.8 542.1 C744.2 532.0 742.7 523.2 740.6 519.6 Z" fill="url(#wavG)"/>
  <path d="M740.6 519.6 C741.8 517.2 742.7 511.4 743.6 504.6 C744.5 511.4 745.4 517.2 746.6 519.6 C745.4 522.0 744.5 527.9 743.6 534.6 C742.7 527.9 741.8 522.0 740.6 519.6 Z" fill="url(#wavG)"/>
  <path d="M745.6 519.6 C746.8 517.0 747.7 510.8 748.6 503.6 C749.5 510.8 750.4 517.0 751.6 519.6 C750.4 522.2 749.5 528.4 748.6 535.6 C747.7 528.4 746.8 522.2 745.6 519.6 Z" fill="url(#wavG)"/>
  <path d="M750.7 519.6 C751.7 517.5 752.5 512.5 753.3 506.6 C754.1 512.5 754.9 517.5 755.9 519.6 C754.9 521.7 754.1 526.8 753.3 532.6 C752.5 526.8 751.7 521.7 750.7 519.6 Z" fill="url(#wavG)"/>
  <path d="M763.5 519.6 C765.3 516.2 766.7 508.1 768.1 498.6 C769.5 508.1 770.9 516.2 772.7 519.6 C770.9 523.0 769.5 531.1 768.1 540.6 C766.7 531.1 765.3 523.0 763.5 519.6 Z" fill="url(#wavG)"/>
  <path d="M763.2 519.6 C764.2 517.7 765.0 513.0 765.8 507.6 C766.6 513.0 767.4 517.7 768.4 519.6 C767.4 521.5 766.6 526.2 765.8 531.6 C765.0 526.2 764.2 521.5 763.2 519.6 Z" fill="url(#wavG)"/>
  <path d="M768.0 519.6 C769.0 517.8 769.8 513.6 770.6 508.6 C771.4 513.6 772.2 517.8 773.2 519.6 C772.2 521.4 771.4 525.6 770.6 530.6 C769.8 525.6 769.0 521.4 768.0 519.6 Z" fill="url(#wavG)"/>
  </g>
 </g>
 <!-- CAN ID blocks -->
 <g fill="#a5cbee" stroke="#4f6f8f" stroke-width="1.300">
  <rect x="124" y="620.500" width="82" height="65"/>
  <rect x="420.500" y="620.500" width="81.500" height="65"/>
  <rect x="698" y="620.500" width="82.500" height="65"/>
 </g>
 <g fill="#a9bdd3" stroke="#7f99b5" stroke-width="0.900">
  <path d="M132.500 669 H138.500 V675 H142 L135.500 682 L129 675 H132.500 Z"/>
  <path d="M428.500 669 H434.500 V675 H438 L431.500 682 L425 675 H428.500 Z"/>
  <path d="M706.500 669 H712.500 V675 H716 L709.500 682 L703 675 H706.500 Z"/>
 </g>
 <!-- CAN Bus -->
 <rect x="84" y="712" width="748" height="32.500" fill="#bababa" stroke="#7c7c7c" stroke-width="1.200"/>
 <path d="M91.500 727 H97.500 V733 H101 L94.500 740.500 L88 733 H91.500 Z" fill="#c4c4c4" stroke="#8f8f8f" stroke-width="0.900"/>
 <!-- Scopes -->
 <rect x="431.500" y="765.500" width="48" height="39" fill="#45b7d1" stroke="#2d6f86" stroke-width="1.200"/>
 <!-- annotation -->
 <rect x="272" y="854" width="383.500" height="17.500" fill="#ead062" stroke="#3a3a2a" stroke-width="1.200"/>
 <!-- ? box -->
 <rect x="814.500" y="373.500" width="30" height="26" fill="#fcfcfc" stroke="#666" stroke-width="1.600"/>
</svg>
<div class="t blk c" style="left:62px;width:200px;top:563px">ABS Controller</div>
<div class="t blk c" style="left:360px;width:200px;top:579px">Vehicle Dynamics (Plant)</div>
<div class="t blk c" style="left:636px;width:200px;top:563px">Background Traffic</div>
<div class="t blk c" style="left:65px;width:200px;top:648.5px;color:#264563;-webkit-text-stroke:0.3px #264563">CAN ID:5</div>
<div class="t blk c" style="left:361px;width:200px;top:648.5px;color:#264563;-webkit-text-stroke:0.3px #264563">CAN ID:6</div>
<div class="t blk c" style="left:639px;width:200px;top:648.5px;color:#264563;-webkit-text-stroke:0.3px #264563">CAN ID:4</div>
<div class="t blk c" style="left:357px;width:200px;top:724px;color:#333">CAN Bus</div>
<div class="t blk c" style="left:355px;width:200px;top:781px;font-size:11.5px;color:#1d5568;-webkit-text-stroke:0.3px #1d5568">Scopes</div>
<div class="t c" style="left:264px;width:400px;top:855.8px;font-size:13.9px;color:#2a2612;letter-spacing:0;-webkit-text-stroke:0.25px #2a2612">Effects of Communication Delays on an ABS Control System</div>
<div class="t c" style="left:729px;width:200px;top:378px;font-size:18px;color:#555;-webkit-text-stroke:0.3px #555">?</div>
<!-- ===== Simulation Data Inspector window ===== -->
<div class="a" style="left:892px;top:56px;width:889px;height:1001px;background:#fff"></div>
<div class="a" style="left:889.500px;top:56px;width:2.500px;height:1002px;background:linear-gradient(90deg,#b9b9b9,#7a7a7a 45%,#c9c9c9)"></div>
<div class="a" style="left:892px;top:56px;width:889px;height:1px;background:#9a9a9a"></div>
<!-- matlab icon -->
<svg style="left:899px;top:63px" width="22" height="22" viewBox="0 0 22 22">
 <path d="M1.500 12 L8 8.500 L10.500 12.500 L6.500 15.500 Z" fill="#5b86b8"/>
 <path d="M8 8.500 L13 1.500 L15 6 L12 19 L10 15.500 L6.500 15.500 L10.500 12.500 Z" fill="#d9641c"/>
 <path d="M8 8.500 L13 1.500 L11.500 9 L9.500 13 Z" fill="#8a3a16"/>
 <path d="M13 1.500 L15.500 7 L19.500 17.500 L15 13 L12 19 Z" fill="#f2a23a"/>
 <path d="M15.500 7 L19.500 17.500 L16 13.500 Z" fill="#a3521f"/>
</svg>
<div class="t ui" style="left:924px;top:68px;font-size:13.500px;color:#a2a2a2;letter-spacing:0.27px">Simulation Data Inspector - untitled*</div>
<svg style="left:1630px;top:60px" width="140" height="28" viewBox="0 0 140 28">
 <path d="M8 14.500 H19" stroke="#cfcfcf" stroke-width="1.200"/>
 <rect x="62" y="8.500" width="10.500" height="10.500" fill="none" stroke="#bdbdbd" stroke-width="1.100"/>
 <path d="M116.500 8.500 L127.500 19.500 M127.500 8.500 L116.500 19.500" stroke="#b2b2b2" stroke-width="1.300"/>
</svg>
<!-- left strip -->
<div class="a" style="left:892px;top:92px;width:52px;height:965px;background:linear-gradient(90deg,#f1f1f1,#ececec)"></div>
<div class="a" style="left:944px;top:92px;width:837px;height:965px;background:#fcfcfc"></div>
<svg style="left:928px;top:96px" width="12" height="14" viewBox="0 0 12 14"><path d="M3.500 2.500 L8.500 7 L3.500 11.500" fill="none" stroke="#b9b9b9" stroke-width="1.500"/></svg>
<svg style="left:892px;top:160px" width="52" height="520" viewBox="0 0 52 520">
 <g stroke="#e2e2e2" stroke-width="1"><path d="M2 62.500 H50 M2 128 H50 M2 194.500 H50 M2 261 H50 M2 326 H50 M2 393 H50"/></g>
 <!-- plus -->
 <circle cx="26" cy="29.500" r="15.700" fill="none" stroke="#5a5a5a" stroke-width="2.900"/>
 <path d="M17.500 29.500 H34.500 M26 21 V38" stroke="#5a5a5a" stroke-width="2.900"/>
 <!-- folder -->
 <path d="M9.500 86 Q9.500 82.500 13 82.500 H22 L25.500 86.500 H39 Q42.500 86.500 42.500 90 V106 Q42.500 109.500 39 109.500 H13 Q9.500 109.500 9.500 106 Z" fill="#666"/>
 <!-- save -->
 <path d="M14 146.500 H38 Q41.500 146.500 41.500 150 V173.500 Q41.500 177 38 177 H17 L10.500 170.500 V150 Q10.500 146.500 14 146.500 Z" fill="#666"/>
 <rect x="15.500" y="150.500" width="22" height="12.500" rx="1.500" fill="#ededed"/>
 <rect x="17.500" y="165.800" width="17" height="7.700" rx="1" fill="#ededed"/><rect x="20.200" y="167.700" width="3.800" height="4" fill="#555"/>
 <!-- download -->
 <path d="M20.500 212.500 H31.500 V223 H38.500 L26 236 L13.500 223 H20.500 Z" fill="#5f5f5f"/><path d="M13.500 240.500 H38.500" stroke="#5f5f5f" stroke-width="2.600"/>
 <!-- upload disabled -->
 <path d="M20.500 300 H31.500 V291 H38.500 L26 278.500 L13.500 291 H20.500 Z" fill="#e4e4e4"/><path d="M13.500 306 H38.500" stroke="#e4e4e4" stroke-width="2.600"/>
 <!-- doc -->
 <path d="M15.500 343 H30 L40 353 V374 Q40 377.500 36.500 377.500 H15.500 Q12 377.500 12 374 V346.500 Q12 343 15.500 343 Z" fill="#666"/>
 <path d="M29.500 343.500 V353.500 H39.500 Z" fill="#ededed"/>
 <!-- gear -->
 <g transform="translate(26 426)">
  <g fill="#5f5f5f">
   <rect x="-5" y="-17" width="10" height="34" rx="2"/>
   <rect x="-5" y="-17" width="10" height="34" rx="2" transform="rotate(60)"/>
   <rect x="-5" y="-17" width="10" height="34" rx="2" transform="rotate(120)"/>
   <circle r="13"/>
  </g>
  <circle r="5.800" fill="#ececec"/>
 </g>
 <!-- help -->
 <circle cx="26" cy="492.500" r="15.500" fill="none" stroke="#5f5f5f" stroke-width="2.400"/>
 <text x="26" y="500" text-anchor="middle" font-family="Liberation Sans, sans-serif" font-weight="bold" font-size="21" fill="#5f5f5f">?</text>
</svg>
<!-- ===== SDI top toolbar ===== -->
<svg style="left:1250px;top:94px" width="531" height="36" viewBox="0 0 531 36">
 <g stroke="#c9c9c9" stroke-width="1.300"><path d="M52.500 4 V32 M144.500 4 V32 M208 4 V32 M357.500 4 V32 M443.500 4 V32"/></g>
 <!-- play -->
 <g fill="none" stroke="#9d9d9d" stroke-width="1.700">
  <path d="M20.500 28 A11 11 0 1 1 31.500 26.800"/>
 </g>
 <path d="M22.300 13 L31.300 17.500 L22.300 22 Z" fill="#9d9d9d"/>
 <path d="M16.500 24 L22.500 26.500 L18.500 30.500 Z" fill="#9d9d9d"/>
 <!-- grid 4 -->
 <g fill="#8c8c8c"><rect x="69" y="7" width="9" height="8.500"/><rect x="81" y="7" width="9" height="8.500"/><rect x="69" y="18.500" width="9" height="8.500"/><rect x="81" y="18.500" width="9" height="8.500"/></g>
 <!-- dotted grid -->
 <g fill="none" stroke="#8c8c8c" stroke-width="1.500">
  <rect x="107" y="7" width="20" height="20" stroke-dasharray="2 2"/>
  <path d="M117 7 V27 M107 17 H127"/>
 </g>
 <!-- flag -->
 <rect x="159" y="6" width="17" height="15" fill="#9a9a9a"/><path d="M179 5 V26" stroke="#9a9a9a" stroke-width="1.400"/>
 <text x="167.500" y="17.500" text-anchor="middle" font-family="Liberation Sans, sans-serif" font-size="10" font-weight="bold" fill="#f3f3f3">1</text>
 <path d="M187.500 12.500 H195.500 L191.500 16.500 Z" fill="#a5a5a5"/>
 <!-- zoom -->
 <circle cx="232" cy="15" r="7" fill="none" stroke="#9a9a9a" stroke-width="1.700"/>
 <path d="M228.500 15 H235.500 M232 11.500 V18.500" stroke="#9a9a9a" stroke-width="1.400"/>
 <path d="M237 20.500 L243.500 27.500" stroke="#9a9a9a" stroke-width="2.400"/>
 <path d="M250 12.500 H258 L254 16.500 Z" fill="#a5a5a5"/>
 <!-- frame -->
 <rect x="272.200" y="7.200" width="24" height="19" rx="2" fill="none" stroke="#959595" stroke-width="1.700"/>
 <g fill="#a5a5a5"><path d="M282.500 11.800 H285.500 L284 9.800 Z"/><path d="M282.500 22 H285.500 L284 24 Z"/><path d="M277 15 V18 L275 16.500 Z"/><path d="M291 15 V18 L293 16.500 Z"/></g>
 <!-- cursor -->
 <path d="M321 7.300 L321 24 L325.300 20.600 L328.800 27 L331.400 25.700 L328.200 19.600 L334 19.200 Z" fill="#5c5c5c"/>
 <path d="M313.300 30.800 H340.700" stroke="#5c5c5c" stroke-width="1.800"/>
 <!-- expand -->
 <g fill="none" stroke="#a2a2a2" stroke-width="1.600"><path d="M385.500 16 L394 8.500 M388 8 H394.500 V14.500 M382.500 19 L375.500 26.800 M375 20.500 V27.300 H382"/></g>
 <!-- fullscreen -->
 <g fill="none" stroke="#a2a2a2" stroke-width="2"><path d="M413.500 14.500 V10.800 H417.500 M424.500 10.800 H428.500 V14.500 M428.500 21 V24.800 H424.500 M417.500 24.800 H413.500 V21"/></g>
 <!-- camera -->
 <path d="M463 11 H467 L469 8.200 H474 L476 11 H479 Q481 11 481 13 V23.800 Q481 25.800 479 25.800 H463 Q461 25.800 461 23.800 V13 Q461 11 463 11 Z" fill="#a0a0a0"/>
 <circle cx="471" cy="18" r="5" fill="#fcfcfc"/><circle cx="471" cy="18" r="2.800" fill="#a0a0a0"/>
 <!-- gear -->
 <g transform="translate(507.800 18)">
  <g fill="#a0a0a0">
   <rect x="-3.200" y="-10.500" width="6.400" height="21" rx="1.200"/>
   <rect x="-3.200" y="-10.500" width="6.400" height="21" rx="1.200" transform="rotate(60)"/>
   <rect x="-3.200" y="-10.500" width="6.400" height="21" rx="1.200" transform="rotate(120)"/>
   <circle r="8"/>
  </g>
  <circle r="3.700" fill="#fcfcfc"/>
 </g>
</svg>
<!-- ===== charts ===== -->
<svg style="left:0;top:0" width="1781" height="1113" viewBox="0 0 1781 1113">
<rect x="946" y="594" width="833" height="462" fill="#fdfdfd" stroke="#5577bd" stroke-width="2"/>
<rect x="991.5" y="162.5" width="786.5" height="406.5" fill="#fff"/>
<path d="M1083.9 162.5 V569 M1176.4 162.5 V569 M1269.0 162.5 V569 M1361.5 162.5 V569 M1454.1 162.5 V569 M1546.7 162.5 V569 M1639.2 162.5 V569 M1731.8 162.5 V569 M991.5 222.5 H1778 M991.5 304.5 H1778 M991.5 385.5 H1778 M991.5 467.5 H1778 M991.5 549.5 H1778" stroke="#dcdcdc" stroke-width="1" fill="none"/>
<path d="M991.5 569 V162.5 H1778" stroke="#5a5a5a" stroke-width="1.300" fill="none"/>
<path d="M991.5 569 H1778" stroke="#8a8a8a" stroke-width="1.400" fill="none"/>
<path d="M1778 569 V162.5" stroke="#909090" stroke-width="1.600" fill="none"/>
<path d="M991.3 569 v4 M1083.9 569 v4 M1176.4 569 v4 M1269.0 569 v4 M1361.5 569 v4 M1454.1 569 v4 M1546.7 569 v4 M1639.2 569 v4 M1731.8 569 v4 M991.5 222.5 h-4 M991.5 304.5 h-4 M991.5 385.5 h-4 M991.5 467.5 h-4 M991.5 549.5 h-4" stroke="#5a5a5a" stroke-width="1" fill="none"/>
<text class="ax" x="991.3" y="583.500" text-anchor="middle">0</text>
<text class="ax" x="1083.9" y="583.500" text-anchor="middle">2</text>
<text class="ax" x="1176.4" y="583.500" text-anchor="middle">4</text>
<text class="ax" x="1269.0" y="583.500" text-anchor="middle">6</text>
<text class="ax" x="1361.5" y="583.500" text-anchor="middle">8</text>
<text class="ax" x="1454.1" y="583.500" text-anchor="middle">10</text>
<text class="ax" x="1546.7" y="583.500" text-anchor="middle">12</text>
<text class="ax" x="1639.2" y="583.500" text-anchor="middle">14</text>
<text class="ax" x="1731.8" y="583.500" text-anchor="middle">16</text>
<text class="ax" x="983.500" y="226.3" text-anchor="end">0.8</text>
<text class="ax" x="983.500" y="308.3" text-anchor="end">0.6</text>
<text class="ax" x="983.500" y="389.3" text-anchor="end">0.4</text>
<text class="ax" x="983.500" y="471.3" text-anchor="end">0.2</text>
<text class="ax" x="983.500" y="553.3" text-anchor="end">0</text>
<rect x="993.500" y="143.500" width="9" height="9" fill="#c8378d"/>
<text x="1008" y="152.500" font-family="Liberation Sans, sans-serif" font-size="14.500" fill="#4a4a4a" letter-spacing="-0.25">CAN Bus Utilization</text>
<path d="M992.6 549.5 L992.6 318.5 L994.0 318.5 L994.0 303.0 L994.3 263.0 L995.5 257.0 L997.7 252.5 L1000.0 248.0 L1002.5 245.0 L1005.5 243.8 L1030.0 243.3 L1058.0 243.0 L1062.8 241.2 L1083.6 240.6 L1090.0 239.2 L1094.0 238.2 L1110.0 238.4 L1130.0 237.8 L1180.0 238.0 L1269.0 237.8 L1274.2 236.0 L1279.3 234.2 L1284.5 232.8 L1289.7 230.9 L1294.9 229.6 L1300.1 228.1 L1305.3 226.5 L1310.4 225.3 L1315.6 223.7 L1320.8 222.6 L1326.0 221.2 L1331.2 220.0 L1336.4 219.0 L1341.5 218.0 L1346.7 216.6 L1351.9 215.5 L1357.1 214.7 L1362.3 213.9 L1367.5 212.7 L1372.6 211.7 L1377.8 211.0 L1383.0 209.7 L1388.2 209.2 L1393.4 208.1 L1398.6 207.3 L1403.7 206.5 L1408.9 205.8 L1414.1 205.3 L1419.3 204.3 L1424.5 203.8 L1429.7 203.2 L1434.8 202.4 L1440.0 201.9 L1445.2 201.0 L1450.4 200.5 L1455.6 200.0 L1460.8 199.7 L1465.9 199.0 L1471.1 198.4 L1476.3 198.1" fill="none" stroke="#da5ca4" stroke-width="1.900" stroke-linejoin="round"/>
<rect x="991.5" y="628" width="786.5" height="405.70000000000005" fill="#fff"/>
<path d="M1083.9 628 V1033.7 M1176.4 628 V1033.7 M1269.0 628 V1033.7 M1361.5 628 V1033.7 M1454.1 628 V1033.7 M1546.7 628 V1033.7 M1639.2 628 V1033.7 M1731.8 628 V1033.7 M991.5 631 H1778 M991.5 707.8 H1778 M991.5 784.5 H1778 M991.5 861.2 H1778 M991.5 938 H1778 M991.5 1015 H1778" stroke="#dcdcdc" stroke-width="1" fill="none"/>
<path d="M991.5 1033.7 V628 H1778" stroke="#5a5a5a" stroke-width="1.300" fill="none"/>
<path d="M991.5 1033.7 H1778" stroke="#6a6a6a" stroke-width="1.200" fill="none"/>
<path d="M991.3 1033.7 v4 M1083.9 1033.7 v4 M1176.4 1033.7 v4 M1269.0 1033.7 v4 M1361.5 1033.7 v4 M1454.1 1033.7 v4 M1546.7 1033.7 v4 M1639.2 1033.7 v4 M1731.8 1033.7 v4 M991.5 631 h-4 M991.5 707.8 h-4 M991.5 784.5 h-4 M991.5 861.2 h-4 M991.5 938 h-4 M991.5 1015 h-4" stroke="#5a5a5a" stroke-width="1" fill="none"/>
<text class="ax" x="991.3" y="1048.500" text-anchor="middle">0</text>
<text class="ax" x="1083.9" y="1048.500" text-anchor="middle">2</text>
<text class="ax" x="1176.4" y="1048.500" text-anchor="middle">4</text>
<text class="ax" x="1269.0" y="1048.500" text-anchor="middle">6</text>
<text class="ax" x="1361.5" y="1048.500" text-anchor="middle">8</text>
<text class="ax" x="1454.1" y="1048.500" text-anchor="middle">10</text>
<text class="ax" x="1546.7" y="1048.500" text-anchor="middle">12</text>
<text class="ax" x="1639.2" y="1048.500" text-anchor="middle">14</text>
<text class="ax" x="1731.8" y="1048.500" text-anchor="middle">16</text>
<text class="ax" x="983.500" y="634.8" text-anchor="end">0.10</text>
<text class="ax" x="983.500" y="711.5999999999999" text-anchor="end">0.08</text>
<text class="ax" x="983.500" y="788.3" text-anchor="end">0.06</text>
<text class="ax" x="983.500" y="865.0" text-anchor="end">0.04</text>
<text class="ax" x="983.500" y="941.8" text-anchor="end">0.02</text>
<text class="ax" x="983.500" y="1018.8" text-anchor="end">0</text>
<rect x="993.500" y="608.500" width="9" height="9" fill="#cf6a2c"/>
<text x="1008" y="617.500" font-family="Liberation Sans, sans-serif" font-size="14.500" fill="#4a4a4a" letter-spacing="-0.38">Message Delivery Delay</text>
<path d="M992.0 1006.5 L1002.2 1006.5 L1003.0 1002.5 L1003.8 1006.5 L1060.2 1006.5 L1061.0 1003.0 L1061.8 1006.5 L1067.2 1006.5 L1068.0 1003.5 L1068.8 1006.5 L1075.2 1006.5 L1076.0 1003.0 L1076.8 1006.5 L1086.2 1006.5 L1087.0 1002.5 L1087.8 1006.5 L1090.2 1006.5 L1091.0 1001.0 L1091.8 1006.5 L1092.7 1006.5 L1093.5 999.5 L1094.3 1006.5 L1097.2 1006.5 L1098.0 1003.0 L1098.8 1006.5 L1109.2 1006.5 L1110.0 1003.0 L1110.8 1006.5 L1130.2 1006.5 L1131.0 1002.5 L1131.8 1006.5 L1133.2 1006.5 L1134.0 1000.5 L1134.8 1006.5 L1157.7 1006.5 L1158.5 997.0 L1159.3 1006.5 L1168.2 1006.5 L1169.0 1001.0 L1169.8 1006.5 L1170.7 1006.5 L1171.5 1000.0 L1172.3 1006.5 L1172.2 1006.5 L1173.0 1002.5 L1173.8 1006.5 L1234.2 1006.5 L1235.0 1003.0 L1235.8 1006.5 L1249.2 1006.5 L1250.0 1003.5 L1250.8 1006.5 L1259.2 1006.5 L1260.0 1003.0 L1260.8 1006.5 L1265.2 1006.5 L1266.0 1003.0 L1266.8 1006.5 L1270.5 1006.5 L1271.9 1002.7 L1272.4 968.0 L1273.0 1001.8 L1274.0 1004.8 L1274.5 985.0 L1275.0 1004.2 L1276.2 1001.5 L1276.8 933.0 L1277.3 1003.4 L1278.2 1003.2 L1278.7 927.5 L1279.2 1005.3 L1280.0 1004.4 L1280.5 950.0 L1281.0 1001.7 L1281.9 1005.9 L1282.4 942.0 L1283.0 1000.7 L1283.7 1002.5 L1284.2 960.0 L1284.8 1004.5 L1285.5 1000.9 L1286.0 913.0 L1286.5 1002.9 L1287.2 1000.2 L1287.8 930.0 L1288.3 1004.0 L1288.9 1004.6 L1289.7 792.0 L1290.5 1003.4 L1291.2 1005.3 L1292.0 874.0 L1292.8 1001.9 L1298.0 1004.2 L1298.5 998.0 L1299.0 1003.6 L1300.0 1003.5 L1300.5 990.0 L1301.0 1002.7 L1302.0 1005.0 L1302.5 975.0 L1303.0 1005.7 L1304.0 1002.8 L1304.8 827.0 L1305.6 1004.0 L1306.0 1000.4 L1306.5 955.0 L1307.0 1004.2 L1308.0 1003.9 L1308.5 968.0 L1309.0 1006.0 L1310.5 1004.9 L1311.0 985.0 L1311.5 1001.7 L1313.0 1002.3 L1313.5 966.0 L1314.0 1004.0 L1315.5 1000.1 L1316.0 990.0 L1316.5 1002.8 L1318.0 1001.0 L1318.5 966.0 L1319.0 1000.7 L1320.5 1000.4 L1321.0 975.0 L1321.5 1004.6 L1323.0 1000.8 L1323.5 960.0 L1324.0 1001.5 L1325.5 1002.3 L1326.0 972.0 L1326.5 1005.2 L1327.9 1000.5 L1328.4 940.0 L1329.0 1002.7 L1330.0 1003.3 L1330.5 968.0 L1331.0 1005.3 L1332.5 1004.9 L1333.0 975.0 L1333.5 1005.2 L1335.0 1001.7 L1335.5 985.0 L1336.0 1002.5 L1337.0 1002.2 L1337.6 957.0 L1338.1 1005.3 L1339.5 1005.7 L1340.0 990.0 L1340.5 1000.9 L1342.0 1001.1 L1342.5 930.0 L1343.0 1001.4 L1343.2 1001.4 L1344.0 874.0 L1344.8 1002.9 L1346.0 1003.5 L1346.8 645.0 L1347.6 1001.6 L1348.2 1000.0 L1349.0 835.0 L1349.8 1002.5 L1351.0 1002.2 L1351.5 930.0 L1352.0 1003.4 L1353.5 1005.7 L1354.0 940.0 L1354.5 1004.1 L1356.0 1003.1 L1356.5 935.0 L1357.0 1003.7 L1358.2 1004.1 L1359.0 892.0 L1359.8 1000.3 L1361.0 1005.4 L1361.5 909.0 L1362.0 1004.7 L1364.0 1005.2 L1364.5 950.0 L1365.0 1004.8 L1367.0 1002.4 L1367.8 894.0 L1368.6 1002.4 L1370.0 1000.6 L1370.5 972.0 L1371.0 1003.8 L1372.5 1000.4 L1373.0 990.0 L1373.5 1000.4 L1375.5 1001.3 L1376.0 978.0 L1376.5 1001.0 L1378.0 1002.0 L1378.5 973.0 L1379.0 1000.3 L1380.5 1000.0 L1381.0 992.0 L1381.5 1000.9 L1383.0 1000.6 L1383.5 985.0 L1384.0 1002.2 L1385.5 1000.2 L1386.0 990.0 L1386.5 1005.2 L1388.5 1003.7 L1389.0 934.0 L1389.5 1000.9 L1391.0 1001.5 L1391.5 960.0 L1392.0 1002.1 L1392.5 1002.2 L1393.0 953.0 L1393.5 1000.7 L1395.0 1005.1 L1395.5 985.0 L1396.0 1006.0 L1397.5 1002.8 L1398.0 992.0 L1398.5 1002.9 L1400.5 1000.5 L1401.0 930.0 L1401.5 1000.6 L1402.5 1002.1 L1403.0 975.0 L1403.5 1001.6 L1404.0 1005.0 L1404.5 933.0 L1405.0 1001.0 L1407.0 1000.1 L1407.6 931.0 L1408.1 1005.7 L1409.5 1003.2 L1410.0 985.0 L1410.5 1000.9 L1412.5 1003.3 L1413.0 923.0 L1413.5 1000.2 L1415.0 1003.2 L1415.5 990.0 L1416.0 1005.9 L1418.0 1005.2 L1418.5 955.0 L1419.0 1004.2 L1420.5 1001.6 L1421.0 985.0 L1421.5 1002.2 L1423.5 1001.0 L1424.0 938.6 L1424.5 1004.6 L1426.0 1003.2 L1426.5 975.0 L1427.0 1004.7 L1429.2 1002.0 L1429.7 936.0 L1430.2 1001.3 L1431.0 1004.9 L1431.5 939.0 L1432.0 1005.9 L1433.5 1005.1 L1434.0 985.0 L1434.5 1004.8 L1436.0 1004.9 L1436.5 966.0 L1437.0 1004.4 L1438.5 1001.4 L1439.0 992.0 L1439.5 1003.1 L1441.5 1002.1 L1442.0 970.0 L1442.5 1000.2 L1444.5 1000.2 L1445.0 925.7 L1445.5 1001.7 L1447.0 1001.6 L1447.5 975.0 L1448.0 1004.2 L1449.5 1005.7 L1450.0 960.0 L1450.5 1002.7 L1451.5 1005.6 L1452.0 955.0 L1452.5 1005.9 L1453.9 1005.7 L1454.7 795.0 L1455.5 1002.2 L1455.4 1001.3 L1456.2 870.0 L1457.0 1001.4 L1456.7 1001.2 L1457.5 797.0 L1458.3 1001.2 L1459.1 1003.7 L1459.9 650.0 L1460.7 1005.4 L1461.0 1005.0 L1461.5 930.0 L1462.0 1002.9 L1462.5 1003.9 L1463.0 960.0 L1463.5 1004.8 L1466.2 1000.5 L1467.0 894.0 L1467.8 1004.0 L1467.7 1005.5 L1468.2 960.0 L1468.8 1004.7 L1468.4 1004.5 L1469.2 894.0 L1470.0 1002.9 L1470.0 1001.1 L1470.5 940.0 L1471.0 1004.7 L1471.2 1002.0 L1472.0 806.7 L1472.8 1004.8 L1472.7 1005.8 L1473.2 930.0 L1473.8 1002.4 L1473.8 1002.4 L1474.3 965.0 L1474.8 1005.7 L1475.7 995.0 L1476.3 1003.0 L1476.5 998.0" fill="none" stroke="#d67538" stroke-width="1.500" stroke-linejoin="round"/>
</svg>
<!-- ===== video player chrome ===== -->
<div class="a" style="left:0;top:1058px;width:1781px;height:18px;background:#171a18"></div>
<div class="a" style="left:0;top:1075px;width:1781px;height:7px;background:#76889a;border-top:1px solid #0a1420;border-bottom:1px solid #050a12"></div>
<div class="a" style="left:0;top:1075px;width:1240px;height:7px;background:#4a80ae;border-top:1px solid #0a1a2c;border-bottom:1px solid #04101e"></div>
<div class="a" style="left:0;top:1082px;width:1781px;height:31px;background:#0f1010"></div>
<svg style="left:0;top:1084px" width="220" height="28" viewBox="0 0 220 28">
 <path d="M17.500 7.500 L27 13 L17.500 18.500 Z" fill="#fff"/>
 <path d="M56 10.500 H59.500 L64 6.500 V19.500 L59.500 15.500 H56 Z" fill="#fff"/>
 <path d="M66 9.500 Q68.500 13 66 16.500" fill="none" stroke="#fff" stroke-width="1.500"/>
 <path d="M66.500 6 Q73.500 13 66.500 20" fill="none" stroke="#fff" stroke-width="1.700"/>
</svg>
<div class="t" style="left:106px;top:1091px;font-size:11px;color:#f2f2f2;letter-spacing:-0.1px">1:34</div>
<div class="t" style="left:146.500px;top:1091px;font-size:11px;color:#f2f2f2">/</div>
<div class="t" style="left:168px;top:1091px;font-size:11px;color:#f2f2f2;letter-spacing:-0.1px">2:15</div>
<div class="t" style="left:1625px;top:1090px;font-size:14px;color:#fff;letter-spacing:-0.2px">1x</div>
<svg style="left:1660px;top:1086px" width="120" height="24" viewBox="0 0 120 24">
 <rect x="7" y="5.500" width="15.500" height="11.800" rx="1.800" fill="#fff"/>
 <path d="M9.500 11.300 H13 M14.800 11.300 H20.200 M9.500 14.300 H15 M16.800 14.300 H20.200" stroke="#111" stroke-width="1.300" fill="none"/>
 <rect x="49.800" y="5.500" width="14.800" height="11.600" rx="1.500" fill="none" stroke="#fff" stroke-width="1.800"/>
 <rect x="56.700" y="10.400" width="6.300" height="4.600" fill="#fff"/>
 <g fill="none" stroke="#fff" stroke-width="1.700"><path d="M95 9.800 V6.800 H98.500 M101.500 6.800 H105 V9.800 M105 13.500 V16.500 H101.500 M98.500 16.500 H95 V13.500"/></g>
</svg>
<!-- watermark -->
<svg style="left:1630px;top:1030px" width="151" height="83" viewBox="0 0 151 83">
 <path d="M7.200 45.600 L24.800 15.300 H46.500 L53.300 24.800 L61.400 15.300 H83.600 L89.500 24 L104.800 3.600 H143.700 L133.800 18.300 H118.400 L117.600 19.700 H132.800 L125.600 30.300 H112 L103 45.600 H80.400 L73.200 33.900 L66 45.600 H42.400 L35.700 33.900 L28.900 45.600 Z" fill="#c2c2c2" fill-opacity="0.620"/>
 <path d="M82.200 45.600 L92.200 29.400 L102.100 45.600 Z" fill="#e2e2e2" fill-opacity="0.550"/>
 <text x="74.600" y="69.400" text-anchor="middle" font-family="Liberation Sans, sans-serif" font-weight="bold" font-size="21.500" fill="#bdbdbd" fill-opacity="0.720" letter-spacing="-0.150">Motor-Fan.jp</text>
</svg>
</div></body></html>
